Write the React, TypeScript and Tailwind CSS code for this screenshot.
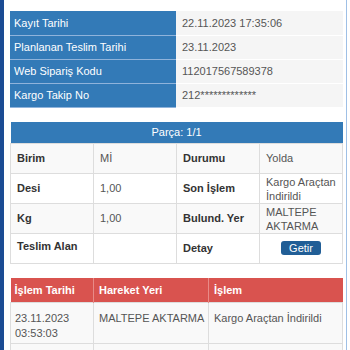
const info = [
  ["Kayıt Tarihi", "22.11.2023 17:35:06"],
  ["Planlanan Teslim Tarihi", "23.11.2023"],
  ["Web Sipariş Kodu", "112017567589378"],
  ["Kargo Takip No", "212*************"],
];

const moves = [
  ["23.11.2023 03:53:03", "MALTEPE AKTARMA", "Kargo Araçtan İndirildi"],
  ["23.11.2023 01:12:40", "ANKARA AKTARMA", "Kargo Araca Yüklendi"],
];

export default function App() {
  return (
    <div
      className="flex h-[350px] w-[350px] overflow-hidden bg-white text-[11px] text-[#444]"
      style={{ fontFamily: '"Liberation Sans", Arial, sans-serif' }}
    >
      <div className="w-[4px] shrink-0 bg-[#1b4c94]" />
      <div className="flex w-[343px] shrink-0 flex-col gap-[14px] border-r border-[#9fc0e6] pl-[6px] pr-[3px] pt-[11px]">
        <table className="w-[333px] table-fixed border-collapse">
          <tbody>
            {info.map(([k, v]) => (
              <tr key={k} className="h-[24px]">
                <td className="w-[166px] border-b border-[#8fb3db] bg-[#337ab7] pl-[4px] text-white">{k}</td>
                <td className="border-b border-white bg-[#f5f5f5] pl-[6px] text-[#555]">{v}</td>
              </tr>
            ))}
          </tbody>
        </table>

        <table className="w-[333px] table-fixed border-collapse">
          <thead>
            <tr className="h-[22px]">
              <th colSpan={4} className="bg-[#337ab7] text-center text-[11px] font-normal text-white">
                Parça: 1/1
              </th>
            </tr>
          </thead>
          <tbody>
            <tr className="h-[30px]">
              <td className="w-[83px] border border-[#ddd] bg-[#f9f9f9] pl-[6px] font-bold text-[#333]">Birim</td>
              <td className="w-[83px] border border-[#ddd] bg-[#f9f9f9] pl-[6px] align-top pt-[6px] text-[#555]">Mİ</td>
              <td className="w-[83px] border border-[#ddd] bg-[#f9f9f9] pl-[6px] font-bold text-[#333]">Durumu</td>
              <td className="border border-[#ddd] bg-[#f9f9f9] pl-[6px] text-[#555]">Yolda</td>
            </tr>
            <tr className="h-[30px]">
              <td className="border border-[#ddd] bg-white pl-[6px] font-bold text-[#333]">Desi</td>
              <td className="border border-[#ddd] bg-white pl-[6px] text-[#555]">1,00</td>
              <td className="border border-[#ddd] bg-white pl-[6px] font-bold text-[#333]">Son İşlem</td>
              <td className="border border-[#ddd] bg-white pl-[6px] leading-[14px] text-[#555]">
                Kargo Araçtan İndirildi
              </td>
            </tr>
            <tr className="h-[30px]">
              <td className="border border-[#ddd] bg-[#f9f9f9] pl-[6px] font-bold text-[#333]">Kg</td>
              <td className="border border-[#ddd] bg-[#f9f9f9] pl-[6px] text-[#555]">1,00</td>
              <td className="border border-[#ddd] bg-[#f9f9f9] pl-[6px] font-bold text-[#333]">Bulund. Yer</td>
              <td className="border border-[#ddd] bg-[#f9f9f9] pl-[6px] pr-[20px] leading-[14px] text-[#555]">
                MALTEPE AKTARMA
              </td>
            </tr>
            <tr className="h-[30px]">
              <td className="border border-[#ddd] bg-white pl-[6px] align-top pt-[4px] font-bold text-[#333]">
                Teslim Alan
              </td>
              <td className="border border-[#ddd] bg-white" />
              <td className="border border-[#ddd] bg-white pl-[6px] font-bold text-[#333]">Detay</td>
              <td className="border border-[#ddd] bg-white text-center">
                <button className="h-[14px] w-[40px] rounded-[3px] bg-[#215e96] text-[11px] leading-[14px] text-white">
                  Getir
                </button>
              </td>
            </tr>
          </tbody>
        </table>

        <table className="w-[333px] table-fixed border-collapse">
          <thead>
            <tr className="h-[24px] bg-[#d9534f] text-left text-white">
              <th className="w-[83px] border-r border-[#e88a87] pl-[4px] text-[11px] font-bold">İşlem Tarihi</th>
              <th className="w-[115px] border-r border-[#e88a87] pl-[5px] text-[11px] font-bold">Hareket Yeri</th>
              <th className="pl-[5px] text-[11px] font-bold">İşlem</th>
            </tr>
          </thead>
          <tbody>
            {moves.map(([d, p, a]) => (
              <tr key={d} className="h-[41px] bg-[#f9f9f9] text-[#555]">
                <td className="border border-[#ddd] pl-[4px] align-top pt-[8px] leading-[15px]">{d}</td>
                <td className="border border-[#ddd] pl-[5px] align-top pt-[8px] leading-[15px]">{p}</td>
                <td className="border border-[#ddd] pl-[5px] align-top pt-[8px] leading-[15px]">{a}</td>
              </tr>
            ))}
          </tbody>
        </table>
      </div>
    </div>
  );
}
